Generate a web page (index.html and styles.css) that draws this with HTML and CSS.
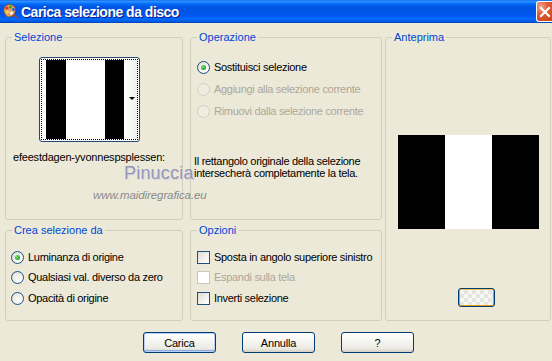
FILE: index.html
```html
<!DOCTYPE html>
<html lang="it">
<head>
<meta charset="utf-8">
<title>Carica selezione da disco</title>
<link rel="stylesheet" href="styles.css">
</head>
<body>
<div class="window">
  <div class="titlebar">
    <svg class="app-icon" width="16" height="16" viewBox="0 0 16 16">
      <path d="M2 9 C1 5 4 1 8 1.5 C12 2 14 5 13.5 8 C13 11 10 14 7 14 C5 14 3 12 2 9 Z" fill="#E8A060" stroke="#8A4A20" stroke-width="0.8"/>
      <circle cx="5" cy="5" r="1.6" fill="#E03020"/>
      <circle cx="8.5" cy="4" r="1.5" fill="#30A040"/>
      <circle cx="11.5" cy="6.5" r="1.4" fill="#2060E0"/>
      <circle cx="5.5" cy="9" r="1.4" fill="#F0E040"/>
      <circle cx="9.5" cy="10" r="1.6" fill="#FFFFFF"/>
      <path d="M12 12 L15 15" stroke="#C04020" stroke-width="1.5"/>
    </svg>
    <span class="title">Carica selezione da disco</span>
    <span class="close-btn">
      <svg width="14" height="14" viewBox="0 0 14 14"><path d="M3 3 L11 11 M11 3 L3 11" stroke="#fff" stroke-width="2.2" stroke-linecap="square"/></svg>
    </span>
  </div>

  <div class="groups">
    <fieldset class="group g-sel">
      <legend>Selezione</legend>
      <div class="combo">
        <div class="combo-inner">
          <div class="thumb">
            <span class="stripe black s1"></span><span class="stripe white s2"></span><span class="stripe black s3"></span>
          </div>
          <div class="combo-side"><span class="arrow"></span></div>
        </div>
      </div>
      <div class="filename">efeestdagen-yvonnespsplessen:</div>
    </fieldset>

    <fieldset class="group g-op">
      <legend>Operazione</legend>
      <div class="opts op-list">
        <div class="opt"><span class="radio checked"></span><span>Sostituisci selezione</span></div>
        <div class="opt disabled"><span class="radio"></span><span>Aggiungi alla selezione corrente</span></div>
        <div class="opt disabled"><span class="radio"></span><span>Rimuovi dalla selezione corrente</span></div>
      </div>
      <p class="desc">Il rettangolo originale della selezione<br>intersecherà completamente la tela.</p>
    </fieldset>

    <fieldset class="group g-prev">
      <legend>Anteprima</legend>
      <div class="preview">
        <span class="pstripe black"></span><span class="pstripe white"></span><span class="pstripe black"></span>
      </div>
      <div class="bg-btn"><span class="checker"></span></div>
    </fieldset>

    <fieldset class="group g-crea">
      <legend>Crea selezione da</legend>
      <div class="opts small-list">
        <div class="opt"><span class="radio checked"></span><span>Luminanza di origine</span></div>
        <div class="opt"><span class="radio"></span><span>Qualsiasi val. diverso da zero</span></div>
        <div class="opt"><span class="radio"></span><span>Opacità di origine</span></div>
      </div>
    </fieldset>

    <fieldset class="group g-opz">
      <legend>Opzioni</legend>
      <div class="opts small-list opz-list">
        <div class="opt"><span class="check"></span><span>Sposta in angolo superiore sinistro</span></div>
        <div class="opt disabled"><span class="check"></span><span>Espandi sulla tela</span></div>
        <div class="opt"><span class="check"></span><span>Inverti selezione</span></div>
      </div>
    </fieldset>
  </div>

  <div class="buttons">
    <button class="btn default">Carica</button>
    <button class="btn">Annulla</button>
    <button class="btn">?</button>
  </div>

  <div class="watermark">
    <div class="wm-name">Pinuccia</div>
    <div class="wm-url">www.maidiregrafica.eu</div>
  </div>
</div>
</body>
</html>
```

FILE: styles.css
```css
* { box-sizing: border-box; }
html, body { margin: 0; padding: 0; }
body {
  width: 552px;
  height: 361px;
  overflow: hidden;
  background: #ECE9D8;
  font-family: "Liberation Sans", Arial, sans-serif;
  font-size: 11px;
  color: #000;
}
.window { position: relative; width: 552px; height: 361px; }

.titlebar {
  height: 23px;
  display: flex;
  align-items: center;
  overflow: hidden;
  background: linear-gradient(to bottom, #0058EE 0%, #3593FF 4%, #288EFF 8%, #127DFF 12%, #036FFC 16%, #0262EE 22%, #0057E5 30%, #0054E3 40%, #0055EB 60%, #005BF5 72%, #026AFE 82%, #0062EF 90%, #0052D6 95%, #0040AB 100%);
  padding-left: 2px;
}
.app-icon { flex: none; margin-top: -2px; }
.title {
  margin-left: 3px;
  color: #fff;
  font-weight: bold;
  font-size: 14px;
  letter-spacing: -0.5px;
  text-shadow: 1px 1px 0 #0A1880;
  flex: 1;
}
.close-btn {
  flex: none;
  width: 16px;
  height: 21px;
  align-self: flex-start;
  margin-top: 1px;
  border: 1px solid #fff;
  border-right: none;
  border-radius: 3px 0 0 3px;
  background: radial-gradient(circle at 25% 25%, #F4A890 0%, #E35A36 40%, #C9401C 100%);
  display: flex;
  align-items: center;
  padding-left: 1px;
  overflow: hidden;
}
.close-btn svg { flex: none; }

.groups {
  display: grid;
  grid-template-columns: 5px 178px 7px 192px 3px 166px;
  grid-template-rows: 189px 4px 97px;
  margin-top: 8px;
}
.group {
  margin: 0;
  padding: 0;
  min-width: 0;
  border: 1px solid #D0D0BF;
  border-radius: 3px;
}
.group legend {
  margin-left: 6px;
  padding: 0 2px;
  color: #0046D5;
  font-size: 11px;
  line-height: 13px;
}
.g-sel { grid-column: 2; grid-row: 1; }
.g-op { grid-column: 4; grid-row: 1; }
.g-prev { grid-column: 6; grid-row: 1 / 4; }
.g-crea { grid-column: 2; grid-row: 3; }
.g-opz { grid-column: 4; grid-row: 3; }

/* Selezione */
.combo {
  width: 101px;
  height: 85px;
  margin: 13px 0 0 33px;
  border: 1px solid #24486E;
  border-radius: 3px;
  padding: 1px;
  background: #fff;
}
.combo-inner {
  height: 100%;
  border: 1px dotted #000;
  display: flex;
  background: #fff;
}
.thumb { display: flex; margin-left: 4px; height: 100%; }
.stripe { display: block; height: 100%; }
.black { background: #000; }
.white { background: #fff; }
.s1 { width: 20px; }
.s2 { width: 39px; }
.s3 { width: 19px; }
.combo-side {
  flex: 1;
  background: linear-gradient(to right, #fff, #EEEEEA);
  position: relative;
}
.arrow {
  position: absolute;
  right: 2px;
  top: 37px;
  width: 0; height: 0;
  border-left: 3px solid transparent;
  border-right: 3px solid transparent;
  border-top: 3px solid #000;
}
.filename {
  margin: 9px 0 0 7px;
  line-height: 13px;
  letter-spacing: -0.2px;
}

/* options */
.opts { display: flex; flex-direction: column; }
.op-list { margin: 17px 0 0 6px; gap: 9px; }
.small-list { margin: 14px 0 0 5px; gap: 7.3px; }
.opz-list { margin-left: 6px; }
.opt {
  display: flex;
  align-items: center;
  gap: 4px;
  height: 13px;
  line-height: 13px;
  letter-spacing: -0.3px;
  white-space: nowrap;
}
.opt.disabled { color: #ACA899; }
.radio {
  flex: none;
  width: 13px; height: 13px;
  border-radius: 50%;
  border: 1px solid #1C5180;
  background: radial-gradient(circle at 70% 70%, #fff 0%, #F0F0EA 50%, #D8D5CB 100%);
  display: flex;
  align-items: center;
  justify-content: center;
}
.radio.checked::after {
  content: "";
  width: 5px; height: 5px;
  border-radius: 50%;
  background: radial-gradient(circle at 35% 35%, #7FE07F, #21A121 70%);
}
.disabled .radio {
  border-color: #D2CFC3;
  background: #EFEDE2;
}
.check {
  flex: none;
  width: 13px; height: 13px;
  border: 1px solid #1C5180;
  background: linear-gradient(135deg, #DCDBD3 0%, #F2F1EC 55%, #fff 100%);
}
.disabled .check {
  border-color: #CAC8BB;
  background: #fff;
}
.desc {
  margin: 37px 0 0 3px;
  line-height: 12px;
  letter-spacing: -0.3px;
}

/* Anteprima */
.preview {
  display: flex;
  width: 141px;
  height: 94px;
  margin: 91px 0 0 12px;
}
.pstripe { width: 47px; height: 100%; }
.bg-btn {
  width: 37px;
  height: 19px;
  margin: 59px 0 0 72px;
  border: 1px solid #003C74;
  border-radius: 3px;
  padding: 1px;
  background: #F4C65A;
  box-shadow: inset 0 -1px 0 1px #E59B16;
}
.checker {
  display: block;
  height: 100%;
  border-radius: 1px;
  background-color: #F6F6F4;
  background-image:
    linear-gradient(45deg, #E4E4E0 25%, transparent 25%, transparent 75%, #E4E4E0 75%),
    linear-gradient(45deg, #E4E4E0 25%, transparent 25%, transparent 75%, #E4E4E0 75%);
  background-size: 8px 8px;
  background-position: 0 0, 4px 4px;
}

/* buttons */
.buttons {
  display: flex;
  justify-content: center;
  gap: 26px;
  margin-top: 11px;
  padding-left: 5px;
}
.btn {
  width: 73px;
  height: 21px;
  padding: 0;
  font-family: "Liberation Sans", Arial, sans-serif;
  font-size: 11px;
  letter-spacing: -0.2px;
  color: #000;
  border: 1px solid #003C74;
  border-radius: 3px;
  background: linear-gradient(to bottom, #FFFFFF 0%, #F6F6F2 40%, #ECEBE5 80%, #D6D0C5 100%);
}
.btn.default { box-shadow: inset 0 0 0 1px #B9D1F6, inset 0 -1px 0 1px #89ADE4; }

/* watermark overlay */
.watermark {
  position: absolute;
  left: 93px;
  top: 163px;
  pointer-events: none;
}
.wm-name {
  margin-left: 31px;
  font-size: 18px;
  line-height: 20px;
  color: #9797B6;
  letter-spacing: 0.2px;
  text-shadow: 1px 1px 0 #D8D8E4;
}
.wm-url {
  margin-top: 6px;
  font-size: 11.5px;
  line-height: 12px;
  font-style: italic;
  color: #8A8A8A;
  letter-spacing: -0.1px;
}
```
